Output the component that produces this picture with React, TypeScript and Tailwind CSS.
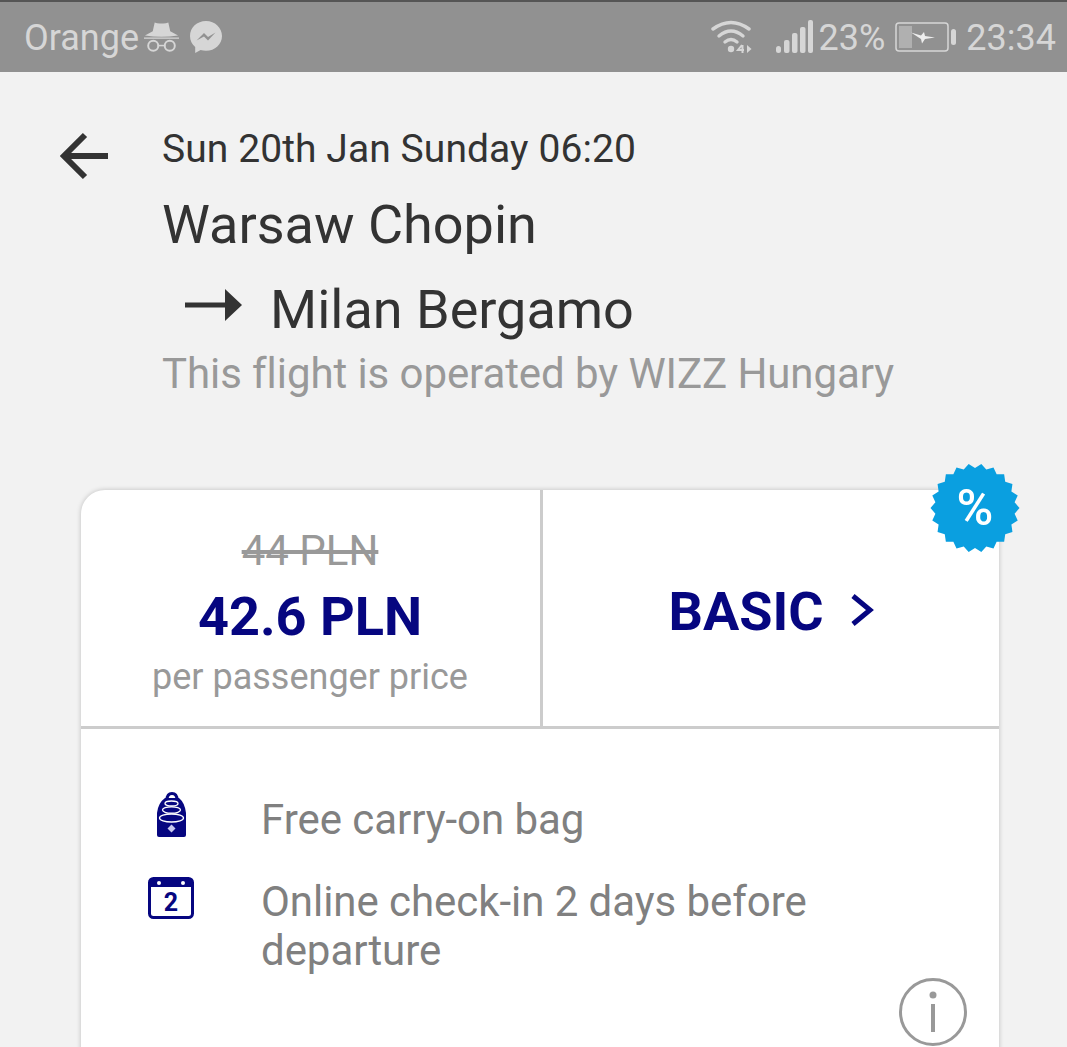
const burstPoints = Array.from({ length: 44 }, (_, i) => {
    const r = i % 2 === 0 ? 44.5 : 40;
    const a = ((i + 1) / 44) * Math.PI * 2 - Math.PI / 2;
    return `${(45 + r * Math.cos(a)).toFixed(2)},${(45 + r * Math.sin(a)).toFixed(2)}`;
}).join(" ");

function SpyIcon() {
    return (
        <svg width="35" height="34" viewBox="0 0 36 34" fill="#d6d6d6">
            <path d="M9 11 L11 2 Q14 3.500 18 3 Q22 3.500 25 2 L27 11 L35 15.500 Q18 18 1 15.500 Z" />
            <path d="M0 17.500h36v1.200H0z" />
            <circle cx="9.500" cy="26" r="5.200" fill="none" stroke="#d6d6d6" strokeWidth="2" />
            <circle cx="26.500" cy="26" r="5.200" fill="none" stroke="#d6d6d6" strokeWidth="2" />
            <path d="M14 25h8v1.600h-8z" />
        </svg>
    );
}

function MessengerIcon() {
    return (
        <svg width="34" height="34" viewBox="0 0 34 34">
            <path
                d="M17 1C8 1 1 7.600 1 16c0 4.500 2 8.400 5.200 11.100V33l5.400-3c1.700.5 3.500.8 5.400.8 9 0 16-6.600 16-14.800S26 1 17 1z"
                fill="#d6d6d6"
            />
            <path d="M7.500 20.500 L15 13 L19 17 L26.500 12.500 L19 20.500 L15 16.500 Z" fill="#919191" />
        </svg>
    );
}

function WifiIcon() {
    return (
        <svg width="41" height="34" viewBox="0 0 41 34" fill="none" stroke="#d6d6d6" strokeWidth="3.400" strokeLinecap="round">
            <path d="M2 9 Q20 -4 38 9" />
            <path d="M8 16 Q20 6 32 16" />
            <path d="M14 22 Q20 17 26 22" />
            <circle cx="20" cy="29" r="3.200" fill="#d6d6d6" stroke="none" />
            <path d="M31 25 L27 30 H33 M31.500 25 V33" strokeWidth="2" strokeLinecap="butt" />
            <path d="M36 25 V33 L40.500 29 Z" fill="#d6d6d6" stroke="none" />
        </svg>
    );
}

function SignalIcon() {
    return (
        <svg width="37" height="34" viewBox="0 0 37 34" fill="#d6d6d6">
            <rect x="0" y="26" width="5" height="7" rx="2.500" />
            <rect x="8" y="20" width="5.500" height="13" rx="2" />
            <rect x="16" y="13" width="5.500" height="20" rx="2" />
            <rect x="24" y="7" width="5.500" height="26" rx="2" />
            <rect x="32" y="0" width="5" height="33" rx="2" />
        </svg>
    );
}

function BatteryIcon() {
    return (
        <svg width="62" height="30" viewBox="0 0 62 30">
            <rect x="1" y="1" width="52" height="28" rx="3" fill="none" stroke="#d6d6d6" strokeWidth="1.500" />
            <rect x="4" y="4" width="13" height="22" fill="#b0b0b0" />
            <path d="M16 10.500 L26 13.500 L29 10 L30 14 L40 15.500 L30 17 L27 21.500 L26 17 Z" fill="#eeeeee" />
            <rect x="56" y="7" width="5" height="16" rx="2.500" fill="#d6d6d6" />
        </svg>
    );
}

function BagIcon() {
    return (
        <svg width="32" height="46" viewBox="0 0 32 46">
            <path d="M11 8 Q11 1.500 16 1.500 Q21 1.500 21 8" fill="none" stroke="#060680" strokeWidth="3" />
            <path d="M1 21 Q2 11 9 6 H23 Q29 11 30 21 V43 Q30 45 28 45 H3 Q1 45 1 43 Z" fill="#060680" />
            <g fill="none" stroke="#fff" strokeWidth="1.300">
                <ellipse cx="15.500" cy="11.500" rx="6.500" ry="2.500" />
                <ellipse cx="15.500" cy="18" rx="9" ry="3.200" />
                <ellipse cx="15.500" cy="26" rx="12" ry="4" />
            </g>
            <path d="M15.500 32.500 L19.500 36.500 L15.500 40.500 L11.500 36.500 Z" fill="#c8c8ee" />
        </svg>
    );
}

function CalendarIcon() {
    return (
        <svg width="46" height="42" viewBox="0 0 46 42">
            <rect x="1.500" y="1.500" width="43" height="39" rx="4" fill="#fff" stroke="#060680" strokeWidth="3" />
            <path d="M1.500 6 Q1.500 1.500 6 1.500 H40 Q44.500 1.500 44.500 6 V10 H1.500 Z" fill="#060680" />
            <circle cx="11" cy="6" r="2" fill="#fff" />
            <circle cx="35" cy="6" r="2" fill="#fff" />
            <text x="23" y="34" textAnchor="middle" fontSize="25" fontWeight="700" fill="#060680" fontFamily="Roboto, sans-serif">
                2
            </text>
        </svg>
    );
}

export default function App() {
    return (
        <div className="h-[1047px] overflow-hidden bg-[#f2f2f2] font-['Roboto',sans-serif]">
            <div className="flex h-[72px] items-center justify-between border-t-2 border-[#555555] bg-[#919191] pl-[24px] pr-[11px] text-[36px] text-[#d6d6d6]">
                <div className="flex items-center">
                    <span className="mt-[2px]">Orange</span>
                    <span className="ml-[5px] flex"><SpyIcon /></span>
                    <span className="ml-[10px] flex"><MessengerIcon /></span>
                </div>
                <div className="flex items-center">
                    <WifiIcon />
                    <span className="ml-[24px] flex"><SignalIcon /></span>
                    <span className="ml-[6px] mt-[2px]">23%</span>
                    <span className="ml-[10px] flex"><BatteryIcon /></span>
                    <span className="ml-[9px] mt-[2px]">23:34</span>
                </div>
            </div>

            <div className="flex pl-[60px] pt-[55px]">
                <svg width="48" height="48" viewBox="0 0 48 48" fill="none" stroke="#333333" strokeWidth="6" className="mt-[5px]">
                    <path d="M48 24H4" />
                    <path d="M25 3 L4 24 L25 45" />
                </svg>
                <div className="ml-[54px] text-[#333333]">
                    <div className="text-[39px] leading-[44px] tracking-[0.08px]">Sun 20th Jan Sunday 06:20</div>
                    <div className="mt-[22px] text-[54px] leading-[64px]">Warsaw Chopin</div>
                    <div className="mt-[21px] flex h-[64px] items-center text-[54px] leading-[64px]">
                        <svg width="57" height="32" viewBox="0 0 57 32" fill="#333333" className="ml-[23px] -mt-[10px]">
                            <path d="M0 13.500H40V0L57 16L40 32V18.500H0Z" />
                        </svg>
                        <span className="ml-[28px]">Milan Bergamo</span>
                    </div>
                    <div className="mt-[8px] text-[42px] leading-[48px] tracking-[-0.08px] text-[#999999]">This flight is operated by WIZZ Hungary</div>
                </div>
            </div>

            <div className="relative ml-[81px] mt-[92px] w-[918px] rounded-t-[24px] bg-white shadow-[0_0_5px_rgba(0,0,0,0.22)]">
                <div className="flex h-[239px] border-b-[3px] border-[#cccccc]">
                    <div className="w-[462px] border-r-[3px] border-[#cccccc] pr-[1px] pt-[38px] text-center">
                        <div className="text-[42px] leading-[46px] text-[#999999] line-through">44 PLN</div>
                        <div className="mt-[12px] text-[54px] font-bold leading-[62px] text-[#060680]">42.6 PLN</div>
                        <div className="mt-[6px] text-[36px] leading-[46px] text-[#999999]">per passenger price</div>
                    </div>
                    <div className="flex flex-1 items-start justify-center pt-[91px]">
                        <span className="text-[54px] font-bold leading-[62px] text-[#060680]">BASIC</span>
                        <svg width="24" height="34" viewBox="0 0 24 34" fill="none" stroke="#060680" strokeWidth="5" className="ml-[26px] mt-[12px]">
                            <path d="M3 3 L20 17 L3 31" />
                        </svg>
                    </div>
                </div>
                <div className="relative h-[400px] pl-[64px] pt-[66px]">
                    <div className="flex">
                        <div className="w-[116px] pl-[11px] -mt-[3px]"><BagIcon /></div>
                        <div className="text-[42px] leading-[49px] tracking-[-0.05px] text-[#808080]">Free carry-on bag</div>
                    </div>
                    <div className="mt-[33px] flex">
                        <div className="w-[116px] pl-[3px]"><CalendarIcon /></div>
                        <div className="w-[600px] text-[42px] leading-[49px] tracking-[-0.05px] text-[#808080]">Online check-in 2 days before departure</div>
                    </div>
                    <svg width="68" height="68" viewBox="0 0 68 68" fill="none" stroke="#999999" className="absolute right-[32px] top-[249px]">
                        <circle cx="34" cy="34" r="32.500" strokeWidth="3" />
                        <circle cx="34" cy="17" r="3.500" fill="#999999" stroke="none" />
                        <path d="M34 26V54" strokeWidth="4" />
                    </svg>
                </div>
                <div className="absolute -right-[21px] -top-[27px] h-[90px] w-[90px]">
                    <svg width="90" height="90" viewBox="0 0 90 90" className="absolute inset-0">
                        <polygon points={burstPoints} fill="#0a9fe0" />
                    </svg>
                    <span className="absolute inset-0 flex items-center justify-center text-[50px] font-medium leading-none text-white">%</span>
                </div>
            </div>
        </div>
    );
}
